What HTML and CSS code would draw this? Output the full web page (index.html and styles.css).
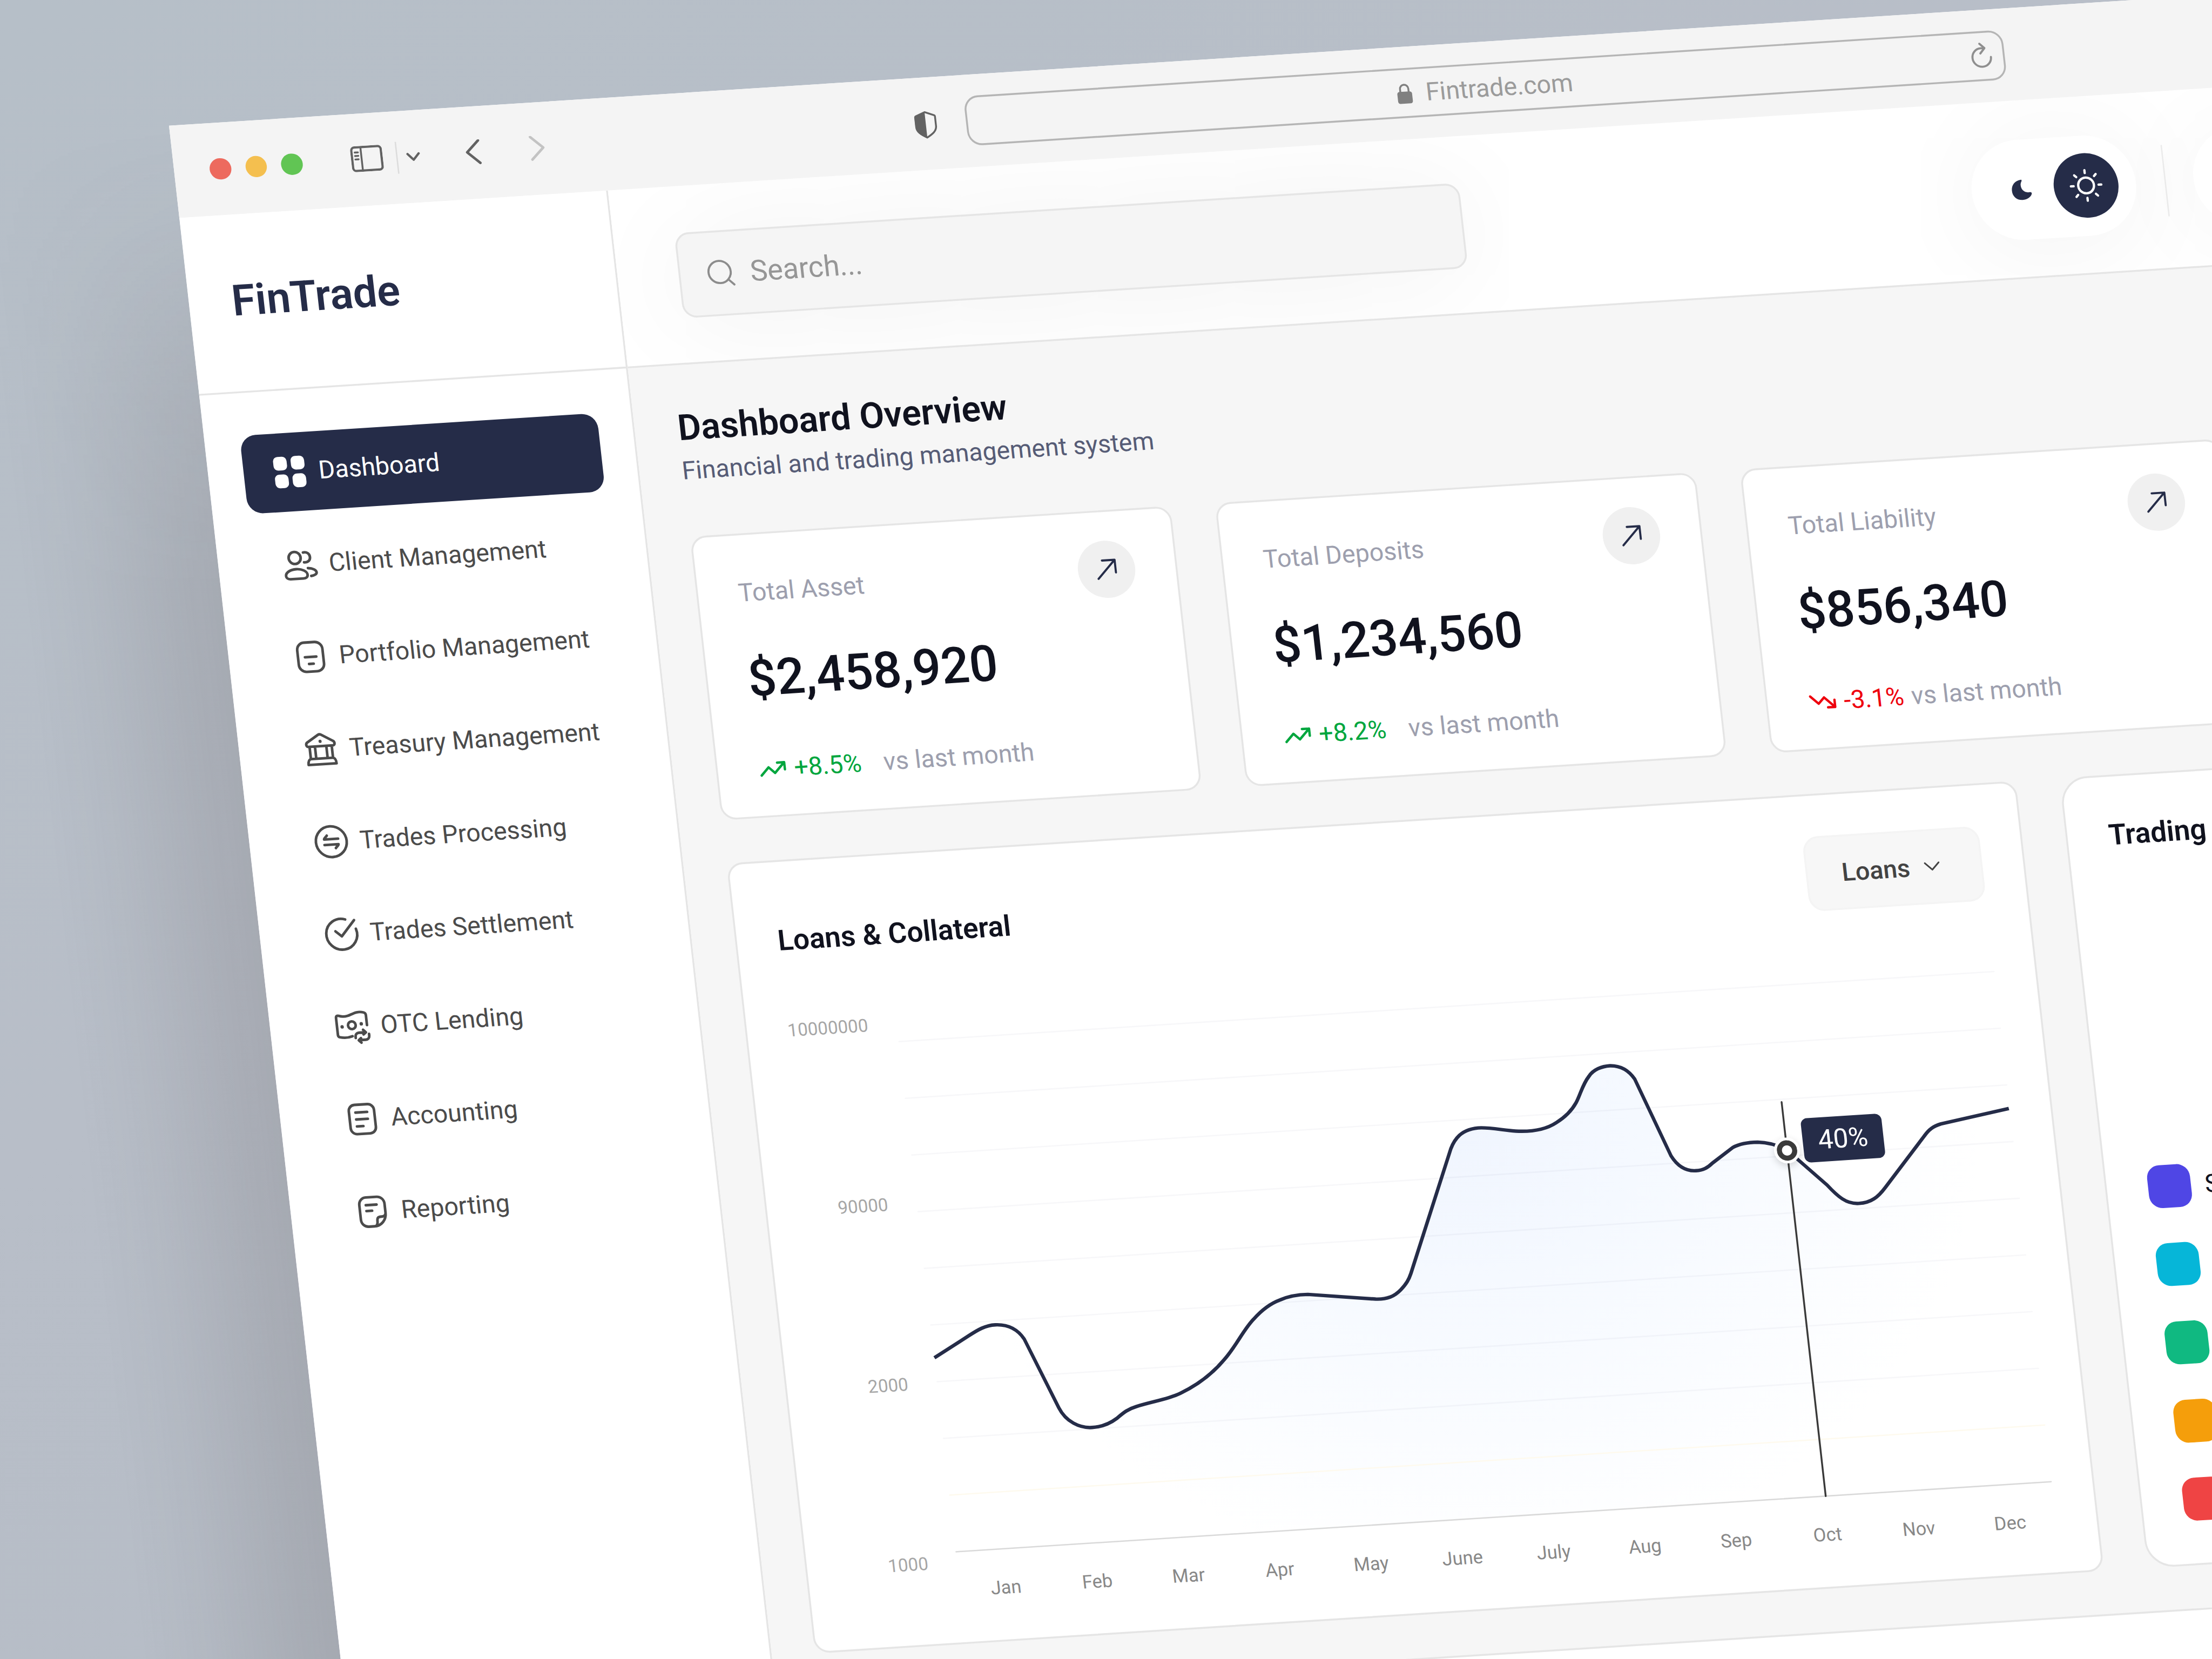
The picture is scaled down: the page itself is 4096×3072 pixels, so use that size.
FILE: index.html
```html
<!DOCTYPE html>
<html lang="en">
<head>
  <meta charset="UTF-8" />
  <meta name="viewport" content="width=device-width, initial-scale=1" />
  <title>FinTrade Dashboard</title>
  <link rel="stylesheet" href="styles.css">
</head>
<body>

  <div class="window">

    <div class="chrome">
      <div class="lights">
        <span class="light red"></span>
        <span class="light yellow"></span>
        <span class="light green"></span>
      </div>
      <svg class="i-panel" viewBox="0 0 69 56"><rect x="2.5" y="2.5" width="64" height="51" rx="7"/><path d="M23 2.5v51M9.5 13.5h7M9.5 21h7M9.5 28.500h7"/></svg>
      <span class="chrome-line"></span>
      <svg class="i-down" viewBox="0 0 40 40"><path d="M8 14l12 13 12-13"/></svg>
      <svg class="i-nav i-back" viewBox="0 0 40 56"><path d="M33 2L7 26.500l26 24.500"/></svg>
      <svg class="i-nav i-forward" viewBox="0 0 40 56"><path d="M7 2l26 24.500L7 51"/></svg>
      <svg class="i-shield" viewBox="0 0 60 64"><path class="fill" d="M30 4L9 12.500c-1.500.6-2 1.500-2 3V36c0 12 10 19 23 26z"/><path d="M30 5l20 8c1.200.5 1.500 1 1.500 2.500V36c0 11-9 17-21.500 24C17.500 53 8.500 47 8.500 36V15.500c0-1.500.3-2 1.500-2.500z"/></svg>
      <div class="url">
        <div class="url-text">
          <svg class="i-lock" viewBox="0 0 36 48"><rect x="2" y="20" width="32" height="26" rx="5"/><path d="M9 22v-8a9 9 0 0 1 18 0v8"/></svg>
          <span>Fintrade.com</span>
        </div>
        <svg class="i-reload" viewBox="0 0 56 64"><path d="M48 33a20 20 0 1 1-20-20h7M26 3l10 10-10 11"/></svg>
      </div>
    </div>

    <div class="app">

      <div class="sidebar">
        <div class="brand">FinTrade</div>
        <div class="menu">
          <a class="item active">
            <svg class="solid" viewBox="0 0 24 24"><rect x="1.800" y="1.700" width="8.800" height="8.900" rx="3"/><rect x="13.200" y="1.700" width="8.800" height="8.900" rx="3"/><rect x="1.800" y="13.200" width="8.800" height="8.900" rx="3"/><rect x="13.200" y="13.200" width="8.800" height="8.900" rx="3"/></svg>
            Dashboard
          </a>
          <a class="item">
            <svg viewBox="0 0 24 24"><circle cx="8.800" cy="7.700" r="3.900"/><path d="M2 19c0-2.300 3.300-4 7-4s7 1.700 7 4c0 1.500-1.300 2.300-2.800 2.300H4.800C3.300 21.300 2 20.500 2 19zM14.600 4.500c2.400-.4 4.200 1 4.200 3.200s-1.800 3.500-4.200 3.200M16.700 14.800c3.200.2 5.300 1.600 5.300 3.100 0 1.100-1.700 1.900-3.700 2.100"/></svg>
            Client Management
          </a>
          <a class="item">
            <svg viewBox="0 0 24 24"><rect x="3.800" y="2.500" width="16.400" height="19" rx="4.800"/><path d="M8.300 12h7.400M10.500 16.500h3"/></svg>
            Portfolio Management
          </a>
          <a class="item">
            <svg viewBox="0 0 24 24"><path d="M3.900 9.800c-1.300-.3-1.500-2-.3-2.900L11 2.400c.7-.4 1.300-.4 2 0l7.400 4.500c1.200.9 1 2.600-.3 2.900zM4.800 10v7.800M8.300 10v7.800M15.700 10v7.800M19.200 10v7.800M2.900 21.500c0-2.200.8-3.700 2.200-3.700h13.800c1.400 0 2.200 1.500 2.200 3.700z"/><path d="M12 6.600v.1" stroke-width="2"/></svg>
            Treasury Management
          </a>
          <a class="item">
            <svg viewBox="0 0 24 24"><circle cx="12" cy="12" r="10"/><path d="M16.600 10.300H7.500c0-.8 1.200-1.400 2-2.400M7.400 13.900h9.100c0 .8-1.200 1.400-2 2.400"/></svg>
            Trades Processing
          </a>
          <a class="item">
            <svg viewBox="0 0 24 24"><path d="M15.300 2.500A10 10 0 1 0 21.600 9M8.200 9.800l3.800 3.500L21 3.300"/></svg>
            Trades Settlement
          </a>
          <a class="item">
            <svg viewBox="0 0 24 24"><path d="M21.800 11.700V5.200c0-.9-.4-1.500-1.300-1.800-4.400-1.500-7.700.8-10.500 1.500-2.100.5-4.100.4-5.800-.3-1.100-.4-1.900.1-1.900 1.300v11c0 .7.400 1.300 1 1.500 2.800.8 5.700.8 8.400-.1"/><circle cx="12" cy="11.200" r="2.500"/><path d="M5.600 11.800v.1M18.200 10.600v.1" stroke-width="2.200"/><path d="M13.600 19.600v-.8c0-1.400 1-2.500 2.500-2.500h3.700M18.900 14.600l1.700 1.700-1.700 1.300M22.500 17.500v1.100c0 1.500-1 2.500-2.500 2.500h-4.400M17 19.900l-1.600 1.300 1.600 1.600"/></svg>
            OTC Lending
          </a>
          <a class="item">
            <svg viewBox="0 0 24 24"><rect x="3.800" y="2.500" width="16.400" height="19" rx="4"/><path d="M8 7.500h7.600M8 12h7.600M8 16.500h4.200"/></svg>
            Accounting
          </a>
          <a class="item">
            <svg viewBox="0 0 24 24"><path d="M20.200 13.300V7.300c0-2.700-2-4.800-4.700-4.800h-7c-2.700 0-4.700 2.100-4.700 4.800v9.400c0 2.700 2 4.800 4.700 4.800h3.800c4.400 0 7.900-3.700 7.900-8.200z"/><path d="M8 7.500h7M8 11.300h3.700M20 14.200c-.5.900-1.300 1.300-2.600 1.300-2.400 0-3 .6-3 3 0 1.400-.4 2.300-1.300 2.900"/></svg>
            Reporting
          </a>
        </div>
      </div>

      <div class="main">

        <div class="topbar">
          <div class="search">
            <svg viewBox="0 0 64 64"><circle cx="29" cy="30" r="24"/><path d="M46 47l12 12"/></svg>
            <span>Search...</span>
          </div>
          <div class="actions">
            <div class="theme">
              <span class="theme-btn"><svg class="i-moon" viewBox="0 0 46 48"><path d="M24 1C10 2 1 12 1 25c0 13 9 22 22 22 11 0 20-6 22-13 .6-2.500-1.500-4-4-3.500C30 32 22 25 22 14c0-3 .8-6 2.500-8.500C26 3 25.500 1 24 1z"/></svg></span>
              <span class="theme-btn on"><svg class="i-sun" viewBox="0 0 72 72"><circle cx="36" cy="36" r="17"/><path d="M36 3v6M36 63v6M3 36h6M63 36h6M12.700 12.700l4 4M55.300 55.300l4 4M12.700 59.300l4-4M55.300 16.700l4-4"/></svg></span>
            </div>
            <span class="actions-line"></span>
            <div class="round"></div>
          </div>
        </div>

        <div class="content">
          <h1>Dashboard Overview</h1>
          <p class="subtitle">Financial and trading management system</p>

          <div class="stats">
            <div class="stat">
              <div class="stat-top">
                <span>Total Asset</span>
                <span class="go"><svg viewBox="0 0 48 48"><path d="M4.500 43.500l39-39M16 4.500h27.500V32"/></svg></span>
              </div>
              <div class="value">$2,458,920</div>
              <div class="change">
                <svg class="up" viewBox="0 0 24 24"><path d="M22 7l-8.500 8.500-5-5L2 17M16 7h6v6"/></svg>
                <span class="pct up">+8.5%</span>
                <span>vs last month</span>
              </div>
            </div>
            <div class="stat">
              <div class="stat-top">
                <span>Total Deposits</span>
                <span class="go"><svg viewBox="0 0 48 48"><path d="M4.500 43.500l39-39M16 4.500h27.500V32"/></svg></span>
              </div>
              <div class="value">$1,234,560</div>
              <div class="change">
                <svg class="up" viewBox="0 0 24 24"><path d="M22 7l-8.500 8.500-5-5L2 17M16 7h6v6"/></svg>
                <span class="pct up">+8.2%</span>
                <span>vs last month</span>
              </div>
            </div>
            <div class="stat">
              <div class="stat-top">
                <span>Total Liability</span>
                <span class="go"><svg viewBox="0 0 48 48"><path d="M4.500 43.500l39-39M16 4.500h27.500V32"/></svg></span>
              </div>
              <div class="value">$856,340</div>
              <div class="change">
                <svg class="down" viewBox="0 0 24 24"><path d="M22 17l-8.500-8.500-5 5L2 7M16 17h6v-6"/></svg>
                <span class="pct down">-3.1%</span>
                <span>vs last month</span>
              </div>
            </div>
          </div>

          <div class="panels">
            <div class="panel loans">
              <div class="panel-head">
                <h2>Loans &amp; Collateral</h2>
                <div class="select">Loans <svg viewBox="0 0 62 62"><path d="M16 23l15 15 15-15"/></svg></div>
              </div>
              <div class="chart">
                <div class="y-axis">
                  <span>10000000</span>
                  <span>90000</span>
                  <span>2000</span>
                  <span>1000</span>
                </div>
                <div class="plot">
                  <div class="plot-area">
                    <svg class="graph" viewBox="0 0 2376 1108">
                      <defs>
                        <radialGradient id="area" gradientUnits="userSpaceOnUse" cx="1180" cy="260" r="1130" gradientTransform="translate(0 40) scale(1 .85)">
                          <stop offset="0" stop-color="#f0f5fe"/>
                          <stop offset=".35" stop-color="#f5f9ff"/>
                          <stop offset=".7" stop-color="#fafcff"/>
                          <stop offset="1" stop-color="#ffffff"/>
                        </radialGradient>
                      </defs>
                      <path class="area" fill="url(#area)" d="M0 686L80 643C100 632 118 623 139 623.500C165 624 185 634 198 658L256 811C268 842 296 858 323 858C348 858 364 851 378 842C395 830 405 823 423 819C460 810 492 808 521 796.600C563 780 597 757 624 730C655 700 672 669 697 647C715 630 735 616 759 609C778 602 798 600 820 601L965 620.500C990 623 1006 617 1021 604C1035 592 1041 583 1047 570L1163 307C1170 293 1176 286 1185 279C1200 268 1215 265 1234 266C1263 268 1290 277 1319 279C1348 281 1374 278 1397 265C1418 254 1433 241 1444 225C1456 207 1462 187 1478 170C1489 156 1508 150 1526 150C1548 151 1565 162 1576 182L1636 353C1647 375 1664 388 1686 388C1702 388 1712 383 1723 374L1771 343C1788 335 1806 334 1826 335C1850 337 1870 345 1888 357L1965 437C1985 463 2002 481 2029 481C2056 481 2072 470 2090 450L2186 345C2198 331 2208 325 2225 321L2375 297V1106H0z"/>
                      <path class="grid" d="M0 0H2376M0 123H2376M0 246H2376M0 369H2376M0 492H2376M0 615H2376M0 738H2376M0 861H2376"/>
                      <path class="grid warm" d="M0 984H2376"/>
                      <path class="axis" d="M0 1107H2376"/>
                      <path class="line" d="M0 686L80 643C100 632 118 623 139 623.500C165 624 185 634 198 658L256 811C268 842 296 858 323 858C348 858 364 851 378 842C395 830 405 823 423 819C460 810 492 808 521 796.600C563 780 597 757 624 730C655 700 672 669 697 647C715 630 735 616 759 609C778 602 798 600 820 601L965 620.500C990 623 1006 617 1021 604C1035 592 1041 583 1047 570L1163 307C1170 293 1176 286 1185 279C1200 268 1215 265 1234 266C1263 268 1290 277 1319 279C1348 281 1374 278 1397 265C1418 254 1433 241 1444 225C1456 207 1462 187 1478 170C1489 156 1508 150 1526 150C1548 151 1565 162 1576 182L1636 353C1647 375 1664 388 1686 388C1702 388 1712 383 1723 374L1771 343C1788 335 1806 334 1826 335C1850 337 1870 345 1888 357L1965 437C1985 463 2002 481 2029 481C2056 481 2072 470 2090 450L2186 345C2198 331 2208 325 2225 321L2375 297"/>
                      <path class="cursor" d="M1887 252V1107"/>
                    </svg>
                    <span class="dot"></span>
                    <span class="tooltip">40%</span>
                  </div>
                  <div class="x-axis">
                    <span>Jan</span><span>Feb</span><span>Mar</span><span>Apr</span><span>May</span><span>June</span><span>July</span><span>Aug</span><span>Sep</span><span>Oct</span><span>Nov</span><span>Dec</span>
                  </div>
                </div>
              </div>
            </div>

            <div class="panel trading">
              <h2>Trading</h2>
              <ul class="legend">
                <li><span class="swatch indigo"></span>S</li>
                <li><span class="swatch cyan"></span></li>
                <li><span class="swatch emerald"></span></li>
                <li><span class="swatch amber"></span></li>
                <li><span class="swatch rose"></span></li>
              </ul>
            </div>
          </div>

          <div class="panel wide"></div>
        </div>
      </div>
    </div>
  </div>

</body>
</html>
```
FILE: styles.css
```css
* {
  box-sizing: border-box;
}

html {
  overflow: hidden;
}

body {
  margin: 0;
  width: 4096px;
  height: 3072px;
  overflow: hidden;
  background: linear-gradient(150deg, #b6bfc8 0%, #b8bec8 40%, #b4bbc4 100%);
  font-family: Roboto, "Liberation Sans", sans-serif;
  color: #10121e;
}

h1, h2, p, ul {
  margin: 0;
  padding: 0;
}

svg {
  display: block;
  flex: none;
  fill: none;
  stroke: currentColor;
  stroke-linecap: round;
  stroke-linejoin: round;
}

/* tilted browser window */
.window {
  position: relative;
  width: 5400px;
  height: 4200px;
  transform-origin: 0 0;
  transform: matrix(0.85333, -0.05461, 0.09549, 0.85333, 313, 232.8);
  background: #fff;
}

/* soft shadow down the left side */
.window::before {
  content: "";
  position: absolute;
  top: 0;
  bottom: 0;
  right: 100%;
  width: 430px;
  background: linear-gradient(to left, rgba(62, 52, 52, 0.14) 0%, rgba(62, 52, 52, 0.113) 20%, rgba(62, 52, 52, 0.074) 42%, rgba(62, 52, 52, 0.036) 65%, rgba(62, 52, 52, 0.01) 85%, rgba(62, 52, 52, 0) 100%);
  -webkit-mask-image: linear-gradient(to bottom, transparent 0, rgba(0, 0, 0, 0.15) 200px, rgba(0, 0, 0, 0.7) 600px, #000 1000px);
  mask-image: linear-gradient(to bottom, transparent 0, rgba(0, 0, 0, 0.15) 200px, rgba(0, 0, 0, 0.7) 600px, #000 1000px);
}

.chrome {
  height: 200px;
  display: flex;
  align-items: center;
  padding-left: 77px;
  background: #f4f4f4;
  color: #626262;
}

.lights {
  display: flex;
  gap: 31px;
}

.light {
  width: 46.5px;
  height: 46.5px;
  border-radius: 50%;
}

.red { background: #ed6a5e; }
.yellow { background: #f4bf4f; }
.green { background: #61c554; }

.i-panel {
  width: 69px;
  height: 56px;
  margin: 0 29px 4px 105px;
  stroke-width: 5;
}

.i-panel path {
  stroke-width: 4;
}

.chrome-line {
  width: 3px;
  height: 69px;
  background: #dcdcdc;
}

.i-down {
  width: 40px;
  height: 40px;
  margin-left: 14px;
  stroke-width: 5;
}

.i-nav {
  width: 40px;
  height: 56px;
  stroke-width: 5.5;
}

.i-back {
  margin-left: 90px;
}

.i-forward {
  margin-left: 99px;
  color: #c3c3c3;
}

.i-shield {
  width: 60px;
  height: 64px;
  margin: 3px 57px 0 793px;
  stroke-width: 4;
}

.i-shield .fill {
  fill: currentColor;
  stroke: none;
}

.url {
  width: 2254px;
  height: 108px;
  display: grid;
  grid-template-columns: 1fr auto 1fr;
  align-items: center;
  border: 4px solid #b5b5b5;
  border-radius: 31px;
  padding: 0 18px 0 16px;
  color: #9b9b9b;
}

.url-text {
  grid-column: 2;
  display: flex;
  align-items: center;
  gap: 28px;
  margin-top: 2px;
  font-size: 54.4px;
  line-height: 64px;
}

.i-lock {
  width: 36px;
  height: 48px;
  color: #808080;
  stroke-width: 4;
}

.i-lock rect {
  fill: currentColor;
  stroke: none;
}

.i-reload {
  width: 56px;
  height: 64px;
  margin-top: 3px;
  justify-self: end;
  stroke-width: 4.5;
  color: #8f8f8f;
}

.app {
  display: flex;
  height: 4000px;
  overflow: hidden;
}

/* sidebar */
.sidebar {
  width: 930px;
  flex: none;
  border-right: 4px solid #e5e5e5;
  background: #fff;
}

.brand {
  height: 386px;
  border-bottom: 4px solid #e5e5e5;
  padding: 125px 0 0 93px;
  font-size: 92.8px;
  line-height: 124px;
  font-weight: 600;
  color: #252c48;
}

.menu {
  display: flex;
  flex-direction: column;
  gap: 31px;
  padding: 92px 0 0 77px;
}

.item {
  width: 775px;
  height: 169.600px;
  display: flex;
  align-items: center;
  gap: 22px;
  padding-left: 60px;
  border-radius: 34px;
  font-size: 54.3px;
  white-space: nowrap;
  color: #4b4b4b;
}

.item svg {
  width: 80px;
  height: 80px;
  stroke-width: 1.7;
}

.item.active {
  background: #252c48;
  color: #fff;
}

.item .solid {
  fill: currentColor;
  stroke: none;
}

/* top bar */
.main {
  flex: 1;
  min-width: 0;
  background: #f6f6f6;
}

.topbar {
  height: 386px;
  display: flex;
  align-items: center;
  overflow: hidden;
  padding-left: 132px;
  border-bottom: 4px solid #e5e5e5;
  background: #fff;
}

.search {
  width: 1703px;
  height: 185px;
  flex: none;
  display: flex;
  align-items: center;
  gap: 31px;
  margin-top: 4px;
  padding-left: 56px;
  border: 4px solid #e5e5e5;
  border-radius: 31px;
  background: #f5f5f5;
  box-shadow: 0 12px 240px rgba(0, 0, 0, 0.06);
  font-size: 63px;
  color: #969696;
}

.search svg {
  width: 64px;
  height: 64px;
  stroke-width: 4.5;
  color: #8c8c8c;
}

.actions {
  flex: none;
  display: flex;
  align-items: center;
  margin: 4px 0 0 1103px;
}

.theme {
  display: flex;
  padding: 38.500px 38px;
  border-radius: 109px;
  background: #fff;
  box-shadow: 0 12px 230px rgba(0, 0, 0, 0.06);
}

.theme-btn {
  width: 140px;
  height: 140px;
  display: flex;
  align-items: center;
  justify-content: center;
  border-radius: 50%;
  color: #252c48;
}

.theme-btn.on {
  background: #252c48;
  color: #fff;
}

.i-moon {
  width: 44px;
  height: 47px;
  fill: currentColor;
  stroke: none;
}

.i-sun {
  width: 72px;
  height: 72px;
  stroke-width: 5;
}

.actions-line {
  width: 3px;
  height: 155px;
  margin: 0 60px 0 62px;
  background: #ececec;
}

.round {
  width: 217px;
  height: 217px;
  border-radius: 50%;
  background: #fff;
  box-shadow: 0 12px 230px rgba(0, 0, 0, 0.06);
}

/* content */
.content {
  width: 4433px;
  padding: 90px 0 0 93px;
}

h1 {
  font-size: 77.500px;
  line-height: 92px;
  font-weight: 600;
}

.subtitle {
  margin: 15px 0 110px -1px;
  font-size: 54.2px;
  line-height: 64px;
  color: #565c76;
}

.stats {
  display: grid;
  grid-template-columns: repeat(3, 1043px);
  gap: 96px;
}

.stat, .panel {
  background: #fff;
  border: 4px solid #e5e5e5;
  border-radius: 34px;
}

.stat {
  height: 616px;
  padding: 62px 87px 0;
  color: #9d9fae;
  font-size: 54.4px;
}

.stat-top {
  display: flex;
  align-items: center;
  justify-content: space-between;
}

.go {
  width: 124px;
  height: 124px;
  display: flex;
  align-items: center;
  justify-content: center;
  border-radius: 50%;
  background: #f0f0f0;
  color: #252c48;
}

.go svg {
  width: 48px;
  height: 48px;
  stroke-width: 4.5;
}

.value {
  margin: 63px 0 103px;
  font-size: 108.5px;
  line-height: 124px;
  font-weight: 500;
  color: #10121e;
}

.change {
  display: flex;
  align-items: center;
  line-height: 64px;
}

.change svg {
  width: 62px;
  height: 62px;
  margin: 0 15px 0 1px;
  stroke-width: 2;
}

.up { color: #00a63e; }
.down { color: #ee000d; }

.pct.up { margin-right: 48px; }
.pct.down { margin-right: 16px; }

.panels {
  display: flex;
  gap: 94px;
  margin: 93px 0;
}

h2 {
  font-size: 62px;
  line-height: 73px;
  font-weight: 600;
}

.loans {
  width: 2798px;
  height: 1715px;
  flex: none;
  padding: 88px;
}

.panel-head {
  display: flex;
  align-items: center;
  justify-content: space-between;
}

.select {
  height: 162px;
  display: flex;
  align-items: center;
  gap: 17px;
  padding: 0 74px;
  border: 4px solid #f4f4f4;
  border-radius: 34px;
  background: #f7f7f7;
  font-size: 54.4px;
  font-weight: 500;
  color: #434343;
}

.select svg {
  width: 62px;
  height: 62px;
  stroke-width: 3.5;
}

.chart {
  display: flex;
  gap: 63px;
  margin-top: 91px;
}

.y-axis {
  width: 174px;
  height: 1216px;
  display: flex;
  flex-direction: column;
  align-items: flex-end;
  justify-content: space-between;
  font-size: 38.750px;
  line-height: 48px;
  color: #a6a6a6;
}

.plot {
  flex: 1;
  padding-top: 63px;
}

.plot-area {
  position: relative;
}

.graph {
  width: 2376px;
  height: 1108px;
  overflow: visible;
}

.area {
  stroke: none;
}

.grid {
  stroke: #1e2850;
  stroke-opacity: 0.035;
  stroke-width: 3;
}

.grid.warm {
  stroke: #fefaee;
  stroke-opacity: 1;
}

.axis {
  stroke: #d9d9d9;
  stroke-width: 3;
}

.line {
  stroke: #252c48;
  stroke-width: 7.5;
  stroke-linecap: butt;
}

.cursor {
  stroke: #3a3a3a;
  stroke-width: 4;
}

.dot {
  position: absolute;
  left: 1859px;
  top: 329px;
  width: 56px;
  height: 56px;
  border: 6px solid #fff;
  border-radius: 50%;
  background: radial-gradient(circle, #fff 10.500px, #3a3a3a 11.500px);
  box-shadow: 0 6px 16px rgba(0, 0, 0, 0.16);
}

.tooltip {
  position: absolute;
  left: 1923px;
  top: 290px;
  width: 175px;
  height: 96px;
  border-radius: 14px;
  background: #252c48;
  color: #fff;
  font-size: 58px;
  line-height: 96px;
  text-align: center;
}

.x-axis {
  display: flex;
  margin-top: 59px;
  font-size: 40.300px;
  line-height: 48px;
  color: #888;
}

.x-axis span {
  flex: 1;
  text-align: center;
}

.trading {
  width: 1140px;
  flex: none;
  padding: 88px 89px;
  border-radius: 60px;
}

.legend {
  list-style: none;
  margin-top: 682px;
  display: flex;
  flex-direction: column;
  gap: 77px;
  font-size: 54.4px;
}

.trading h2 {
  margin-top: 1px;
}

.legend li {
  display: flex;
  align-items: center;
  gap: 30px;
  height: 92.600px;
}

.swatch {
  width: 93px;
  height: 93px;
  border-radius: 28px;
}

.indigo { background: #4f46e5; }
.cyan { background: #06b6d8; }
.emerald { background: #10b981; }
.amber { background: #f59e0b; }
.rose { background: #ef4444; }

.wide {
  width: 4340px;
  height: 700px;
}
```
